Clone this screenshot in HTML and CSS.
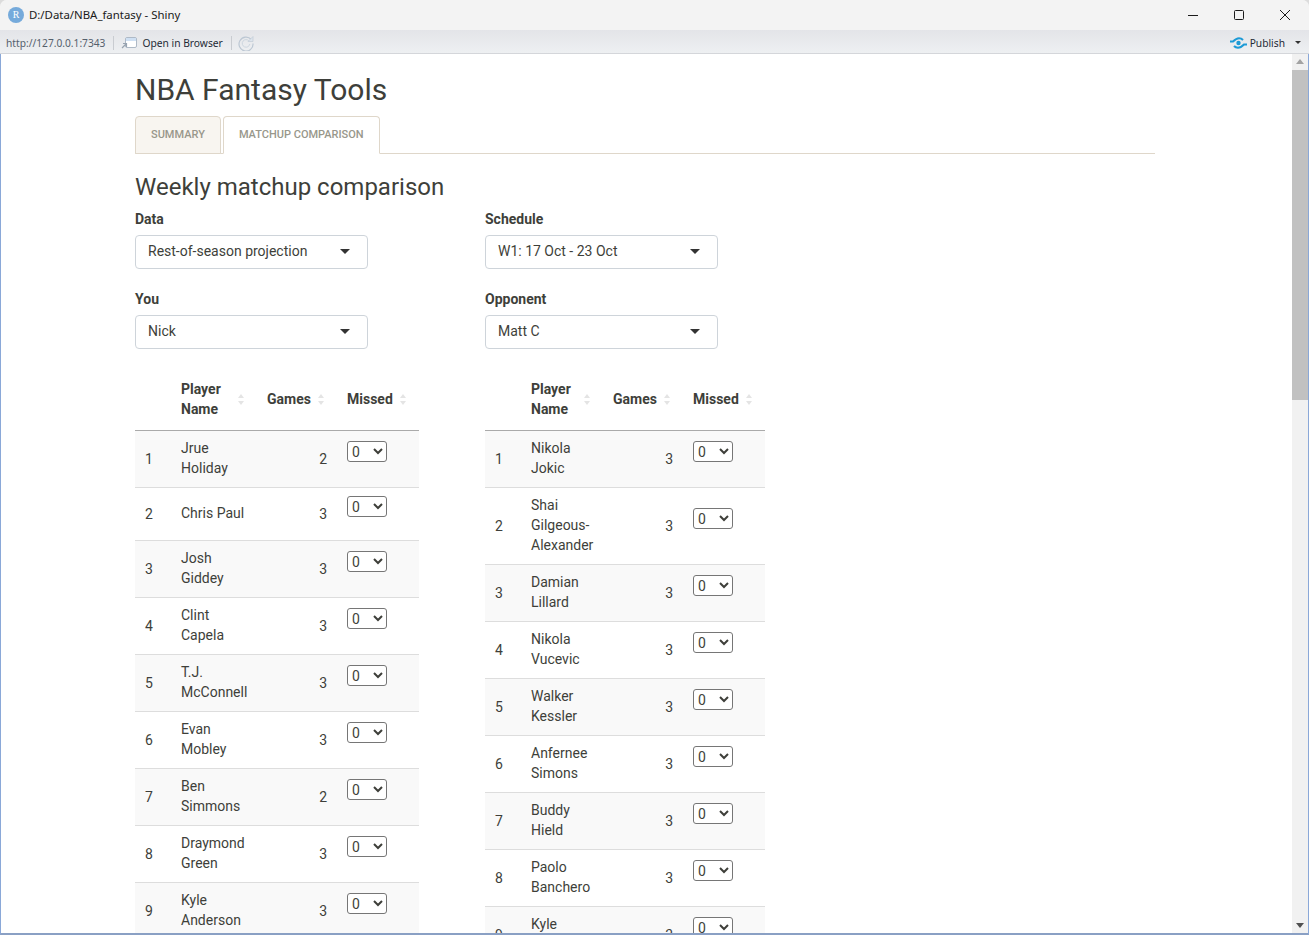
FILE: index.html
```html
<!DOCTYPE html>
<html lang="en">
<head>
  <meta charset="UTF-8">
  <title>D:/Data/NBA_fantasy - Shiny</title>
  <link rel="stylesheet" href="styles.css">
</head>
<body>
  <div class="window">
    <div class="titlebar">
      <span class="r-logo">R</span>
      <span class="window-title">D:/Data/NBA_fantasy - Shiny</span>
      <div class="window-controls">
        <svg width="12" height="12" viewBox="0 0 12 12"><path d="M1 6.5h10" stroke="#1a1a1a" fill="none"/></svg>
        <svg width="12" height="12" viewBox="0 0 12 12"><rect x="1.5" y="1.5" width="9" height="9" rx="1" stroke="#1a1a1a" fill="none"/></svg>
        <svg width="12" height="12" viewBox="0 0 12 12"><path d="M1 1l10 10M11 1L1 11" stroke="#1a1a1a" fill="none"/></svg>
      </div>
    </div>
    <div class="toolbar">
      <span class="url">http://127.0.0.1:7343</span>
      <span class="sep"></span>
      <svg class="open-icon" width="16" height="13" viewBox="0 0 16 13"><rect x="4.5" y="1.5" width="11" height="10" rx="1.500" fill="#fff" stroke="#aeb9c6"/><rect x="5" y="2" width="10" height="3" fill="#cfe0f3"/><path d="M1 12l4-4M2 7.500H5.500V11" stroke="#98a3b0" stroke-width="1.200" fill="none"/></svg>
      <span class="open-text">Open in Browser</span>
      <span class="sep"></span>
      <svg class="reload-icon" width="16" height="16" viewBox="0 0 16 16"><path d="M13.300 4.500A7 7 0 1 0 15 8.500" stroke="#bcc7d3" stroke-width="1.200" fill="none"/><path d="M15 1.500v5h-5z" fill="#dde4ec" stroke="#bcc7d3" stroke-width=".6"/><path d="M11 6A3.800 3.800 0 1 0 11.800 9" stroke="#cdd6df" fill="none"/></svg>
      <div class="publish">
        <svg width="17" height="12" viewBox="0 0 17 12"><path d="M0 4.500h3C5 2.500 6.500 1.200 9 1.200c1.800 0 3 .7 4 1.800M17 7.500h-3c-2 2-3.500 3.300-6 3.300-1.800 0-3-.7-4-1.800" stroke="#1c9ad6" stroke-width="2" fill="none"/><circle cx="8.500" cy="6" r="2.200" fill="#1c9ad6"/></svg>
        <span>Publish</span>
        <i class="publish-caret"></i>
      </div>
    </div>
    <div class="viewport">
      <div class="page">
        <div class="container">
          <h2 class="app-title">NBA Fantasy Tools</h2>
          <ul class="tabs">
            <li class="tab">Summary</li>
            <li class="tab active">Matchup comparison</li>
          </ul>
          <h3 class="section-title">Weekly matchup comparison</h3>
          <div class="inputs">
            <div class="field">
              <label>Data</label>
              <div class="selectbox">Rest-of-season projection</div>
            </div>
            <div class="field">
              <label>Schedule</label>
              <div class="selectbox">W1: 17 Oct - 23 Oct</div>
            </div>
            <div class="field">
              <label>You</label>
              <div class="selectbox">Nick</div>
            </div>
            <div class="field">
              <label>Opponent</label>
              <div class="selectbox">Matt C</div>
            </div>
          </div>
          <div class="tables">
            <table class="roster roster-left" id="youTable"></table>
            <table class="roster roster-right" id="oppTable"></table>
          </div>
        </div>
      </div>
      <div class="scrollbar">
        <i class="arrow-up"></i>
        <div class="thumb"></div>
        <i class="arrow-down"></i>
      </div>
    </div>
  </div>
  <script src="app.js"></script>
</body>
</html>
```

FILE: styles.css
```css
html, body {
  margin: 0;
  padding: 0;
  height: 100%;
  overflow: hidden;
  background-color: #dcdcdc;
}

body {
  font-family: Roboto, "Liberation Sans", sans-serif;
  font-size: 14px;
  line-height: 20px;
  color: #3e3f3a;
}

.window {
  height: 935px;
  display: flex;
  flex-direction: column;
  background-color: #f3f3f3;
  border-radius: 7px 7px 0 0;
  overflow: hidden;
}

.titlebar {
  height: 30px;
  display: flex;
  align-items: center;
  padding-left: 8px;
  background-color: #f3f3f3;
  font-family: "Noto Sans", sans-serif;
  font-size: 11.400px;
  color: #1a1a1a;
}

.r-logo {
  width: 16px;
  height: 16px;
  border-radius: 50%;
  background-color: #75aadb;
  color: #fff;
  font-family: "Liberation Serif", serif;
  font-size: 10px;
  line-height: 16px;
  text-align: center;
}

.window-title {
  margin-left: 5px;
}

.window-controls {
  margin-left: auto;
  display: flex;
  gap: 34px;
  padding-right: 18px;
}

.toolbar {
  height: 24px;
  display: flex;
  align-items: center;
  padding: 2px 0 0 6px;
  box-sizing: border-box;
  background: linear-gradient(#e3e4e8, #eef0f2);
  border-bottom: 1px solid #d4d6da;
  font-family: "Noto Sans", sans-serif;
  font-size: 10.250px;
  color: #1f2a36;
}

.url {
  color: #55606c;
  font-size: 10.200px;
}

.sep {
  width: 1px;
  height: 14px;
  background-color: #c9ccd1;
  margin: 0 8px;
}

.open-icon {
  margin-left: -1px;
  margin-right: 5px;
}

.reload-icon {
  margin-left: -2px;
}

.publish {
  margin-left: auto;
  display: flex;
  align-items: center;
  gap: 3px;
  padding-right: 8px;
}

.publish-caret {
  margin-left: 7px;
  border-top: 3px solid #333;
  border-left: 3px solid transparent;
  border-right: 3px solid transparent;
}

.viewport {
  flex: 1;
  min-height: 0;
  display: flex;
  background-color: #fff;
  border-left: 1px solid #8aa8d8;
  border-right: 1px solid #8aa8d8;
  border-bottom: 2px solid #8aa0c4;
}

.page {
  flex: 1;
  min-width: 0;
  overflow: hidden;
}

.container {
  width: 1020px;
  margin: 0 auto;
  position: relative;
  left: -1.500px;
}

.app-title {
  margin: 0;
  padding-top: 19px;
  height: 43px;
  box-sizing: content-box;
  font-size: 30px;
  line-height: 33px;
  font-weight: 400;
}

.tabs {
  list-style: none;
  margin: 0;
  padding: 0;
  display: flex;
  gap: 2px;
  height: 38px;
  border-bottom: 1px solid #dfd7ca;
  box-sizing: border-box;
}

.tab {
  height: 38px;
  box-sizing: border-box;
  padding: 0 15px;
  background-color: #f8f5f0;
  border: 1px solid #dfd7ca;
  border-radius: 4px 4px 0 0;
  font-size: 11px;
  line-height: 36px;
  font-weight: 500;
  text-transform: uppercase;
  color: #98978b;
}

.tab.active {
  background-color: #fff;
  border-bottom-color: #fff;
}

.section-title {
  margin: 0;
  padding-top: 20px;
  height: 35px;
  font-size: 24px;
  line-height: 26px;
  font-weight: 400;
}

.inputs {
  display: grid;
  grid-template-columns: 350px 350px;
  row-gap: 20px;
}

.field label {
  display: block;
  font-weight: 700;
  margin-bottom: 6px;
}

.selectbox {
  width: 233px;
  height: 34px;
  box-sizing: border-box;
  padding: 0 12px;
  border: 1px solid #ced4da;
  border-radius: 4px;
  line-height: 31px;
  position: relative;
}

.selectbox::after {
  content: "";
  position: absolute;
  right: 17px;
  top: 13px;
  border-top: 5px solid #333;
  border-left: 5px solid transparent;
  border-right: 5px solid transparent;
}

.tables {
  display: grid;
  grid-template-columns: 350px 350px;
  padding-top: 20px;
  align-items: start;
}

.roster {
  table-layout: fixed;
  border-collapse: separate;
  border-spacing: 0;
}

.roster-left { width: 284px; }
.roster-right { width: 280px; }

.roster th,
.roster td {
  padding: 8px 10px;
  vertical-align: middle;
  text-align: left;
  border-bottom: 1px solid #ddd;
}

.roster th {
  padding: 10px 10px 11px;
  font-weight: 700;
  border-bottom: 1px solid #aaa;
  position: relative;
}

.roster td.name {
  padding-top: 7px;
  padding-bottom: 9px;
}

.roster td.num {
  text-align: right;
}

.roster tbody tr:nth-child(odd) {
  background-color: #f9f9f9;
}

.select-wrap {
  margin-bottom: 15px;
  height: 21px;
}

.select-wrap select {
  display: block;
  width: 40px;
  height: 21px;
  padding: 0;
  font-family: Roboto, sans-serif;
  font-size: 14px;
  color: #3e3f3a;
  background-color: #fff;
  border: 1px solid #767676;
  border-radius: 3px;
}

.sort {
  position: absolute;
  right: 13px;
  top: 50%;
  margin-top: -6px;
  display: flex;
  flex-direction: column;
  gap: 3px;
}

.sort::before,
.sort::after {
  content: "";
  border-left: 3.500px solid transparent;
  border-right: 3.500px solid transparent;
}

.sort::before { border-bottom: 4px solid #e4e4e4; }
.sort::after { border-top: 4px solid #e4e4e4; }

.scrollbar {
  width: 16px;
  flex: none;
  display: flex;
  flex-direction: column;
  align-items: center;
  background-color: #f1f1f1;
}

.thumb {
  width: 100%;
  height: 330px;
  margin-top: 6px;
  background-color: #c1c1c1;
}

.arrow-up {
  margin-top: 5px;
  border-bottom: 5px solid #a3a3a3;
  border-left: 4px solid transparent;
  border-right: 4px solid transparent;
}

.arrow-down {
  margin-top: auto;
  margin-bottom: 5px;
  border-top: 5px solid #505050;
  border-left: 4px solid transparent;
  border-right: 4px solid transparent;
}
```

FILE: app.js
```js
var youPlayers = [
  ["Jrue Holiday", 2], ["Chris Paul", 3], ["Josh Giddey", 3],
  ["Clint Capela", 3], ["T.J. McConnell", 3], ["Evan Mobley", 3],
  ["Ben Simmons", 2], ["Draymond Green", 3], ["Kyle Anderson", 3]
];

var oppPlayers = [
  ["Nikola Jokic", 3], ["Shai Gilgeous-Alexander", 3], ["Damian Lillard", 3],
  ["Nikola Vucevic", 3], ["Walker Kessler", 3], ["Anfernee Simons", 3],
  ["Buddy Hield", 3], ["Paolo Banchero", 3], ["Kyle Kuzma", 3]
];

function buildTable(id, widths, players) {
  var table = document.getElementById(id);
  var html = "<colgroup>";
  widths.forEach(function(w) {
    html += '<col style="width:' + w + 'px">';
  });
  html += "</colgroup><thead><tr><th></th>";
  html += '<th>Player Name<span class="sort"></span></th>';
  html += '<th>Games<span class="sort"></span></th>';
  html += '<th>Missed<span class="sort"></span></th></tr></thead><tbody>';

  players.forEach(function(p, i) {
    html += "<tr><td>" + (i + 1) + '</td><td class="name">' + p[0] + "</td>";
    html += '<td class="num">' + p[1] + "</td>";
    html += '<td><div class="select-wrap"><select><option>0</option><option>1</option><option>2</option><option>3</option></select></div></td></tr>';
  });

  table.innerHTML = html + "</tbody>";
}

buildTable("youTable", [36, 86, 80, 82], youPlayers);
buildTable("oppTable", [36, 82, 80, 82], oppPlayers);
```
